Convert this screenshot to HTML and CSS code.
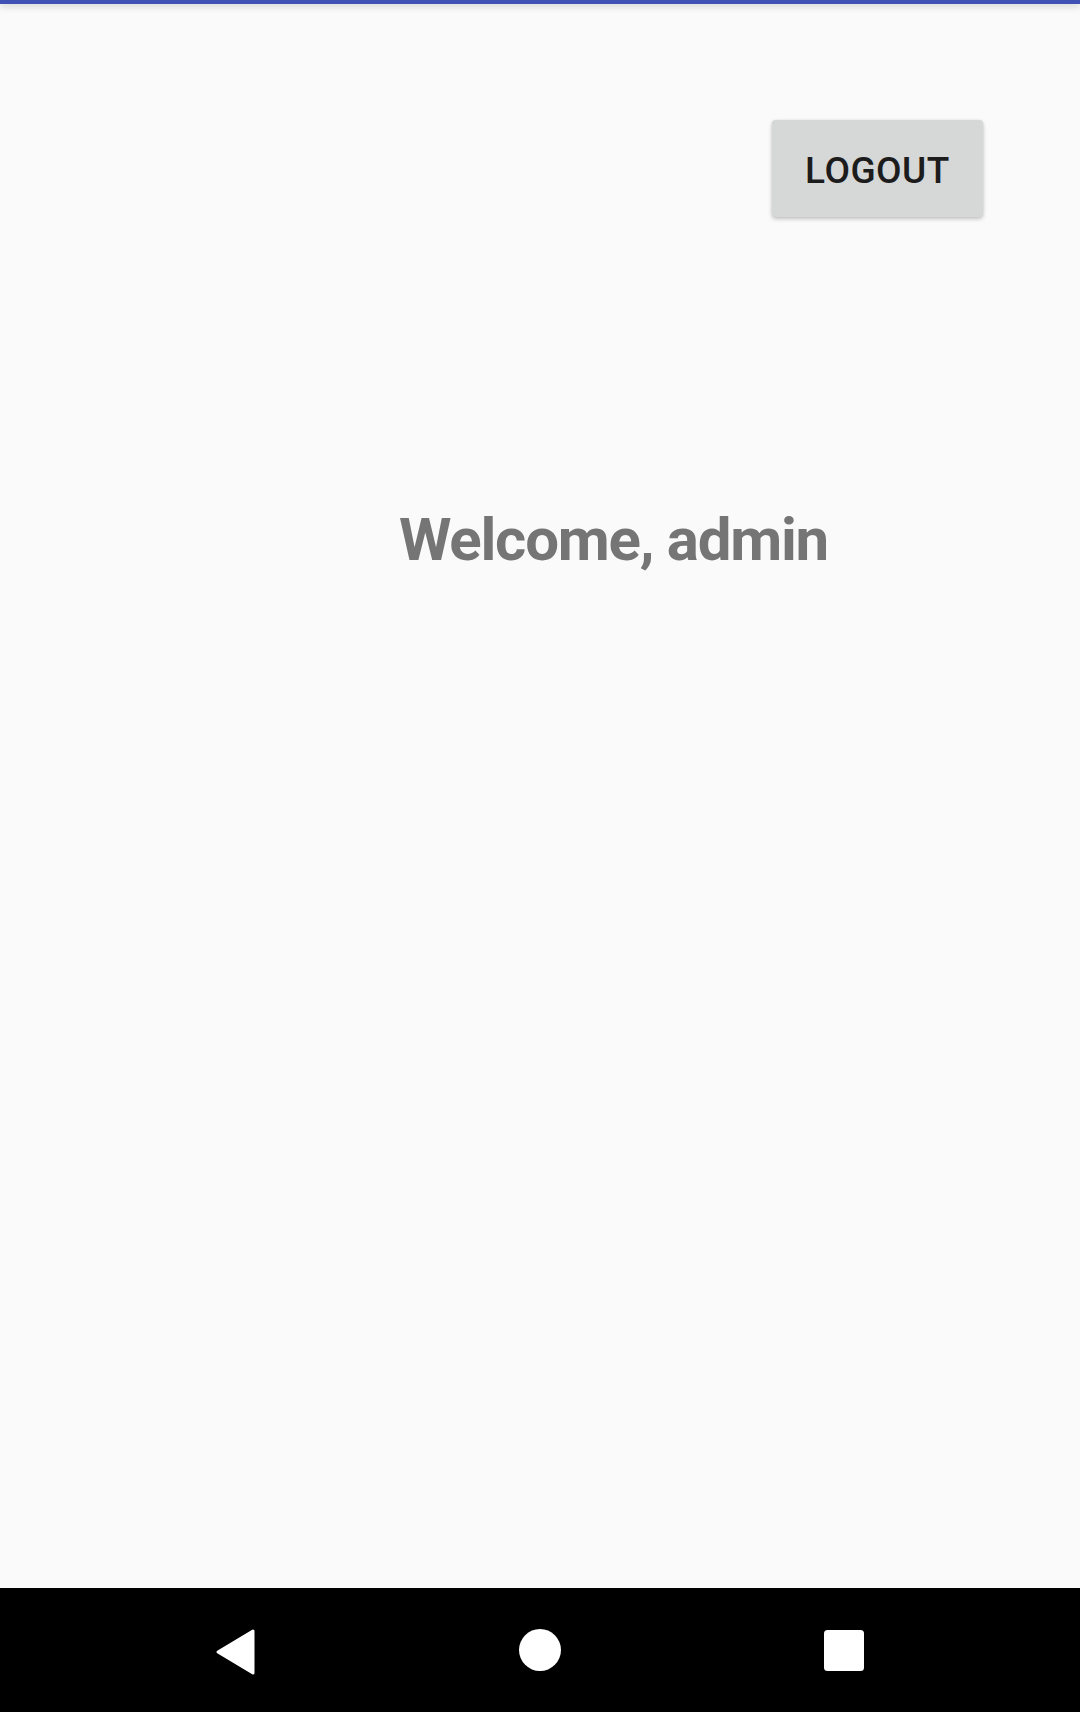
FILE: index.html
```html
<!DOCTYPE html>
<html>
<head>
<meta charset="utf-8">
<link rel="stylesheet" href="styles.css">
</head>
<body>
<div class="screen">
  <div class="appbar"></div>
  <main class="content">
    <div class="toolbar">
      <button class="logout">LOGOUT</button>
    </div>
    <h1 class="welcome">Welcome, admin</h1>
  </main>
  <nav class="navbar">
    <div class="navbtn">
      <svg width="80" height="80" viewBox="0 0 80 80">
        <path d="M57 21 L57 63 L22 42 Z" fill="#fff" stroke="#fff" stroke-width="3" stroke-linejoin="round"/>
      </svg>
    </div>
    <div class="navbtn">
      <svg width="80" height="80" viewBox="0 0 80 80">
        <circle cx="40" cy="40" r="21" fill="#fff"/>
      </svg>
    </div>
    <div class="navbtn">
      <svg width="80" height="80" viewBox="0 0 80 80">
        <rect x="20" y="20" width="40" height="41" rx="3.5" fill="#fff"/>
      </svg>
    </div>
  </nav>
</div>
</body>
</html>
```
FILE: styles.css
```css
* { box-sizing: border-box; }
html, body {
  margin: 0;
  padding: 0;
  background: #fafafa;
  font-family: Roboto, "Noto Sans", "Liberation Sans", sans-serif;
}
.screen {
  width: 1080px;
  height: 1712px;
  display: flex;
  flex-direction: column;
  background: #fafafa;
  overflow: hidden;
}
.appbar {
  height: 4px;
  flex: none;
  background: #3f51b5;
  box-shadow: 0 2px 7px rgba(0, 0, 0, 0.22);
  position: relative;
  z-index: 1;
}
.content {
  flex: 1;
  display: flex;
  flex-direction: column;
}
.toolbar {
  display: flex;
  justify-content: flex-end;
  padding-top: 116px;
  padding-right: 97px;
}
.logout {
  width: 211px;
  height: 97px;
  border: none;
  border-radius: 4px;
  background: #d6d7d7;
  color: #1c1c1c;
  font-family: Roboto, "Liberation Sans", sans-serif;
  font-weight: 500;
  font-size: 37px;
  letter-spacing: 0.5px;
  padding: 3px 0 0 0;
  box-shadow: 0 2px 4px rgba(0, 0, 0, 0.22), 0 0 2px rgba(0, 0, 0, 0.08);
  display: flex;
  align-items: center;
  justify-content: center;
}
.welcome {
  margin: 288px 0 0 0;
  padding-left: 399px;
  font-family: Roboto, "Liberation Sans", sans-serif;
  font-weight: 700;
  font-size: 60px;
  letter-spacing: -1.25px;
  line-height: 70px;
  color: #757575;
}
.navbar {
  height: 124px;
  flex: none;
  background: #000;
  display: flex;
  align-items: center;
  justify-content: center;
  gap: 224px;
}
.navbtn {
  width: 80px;
  height: 80px;
  display: flex;
}
```
